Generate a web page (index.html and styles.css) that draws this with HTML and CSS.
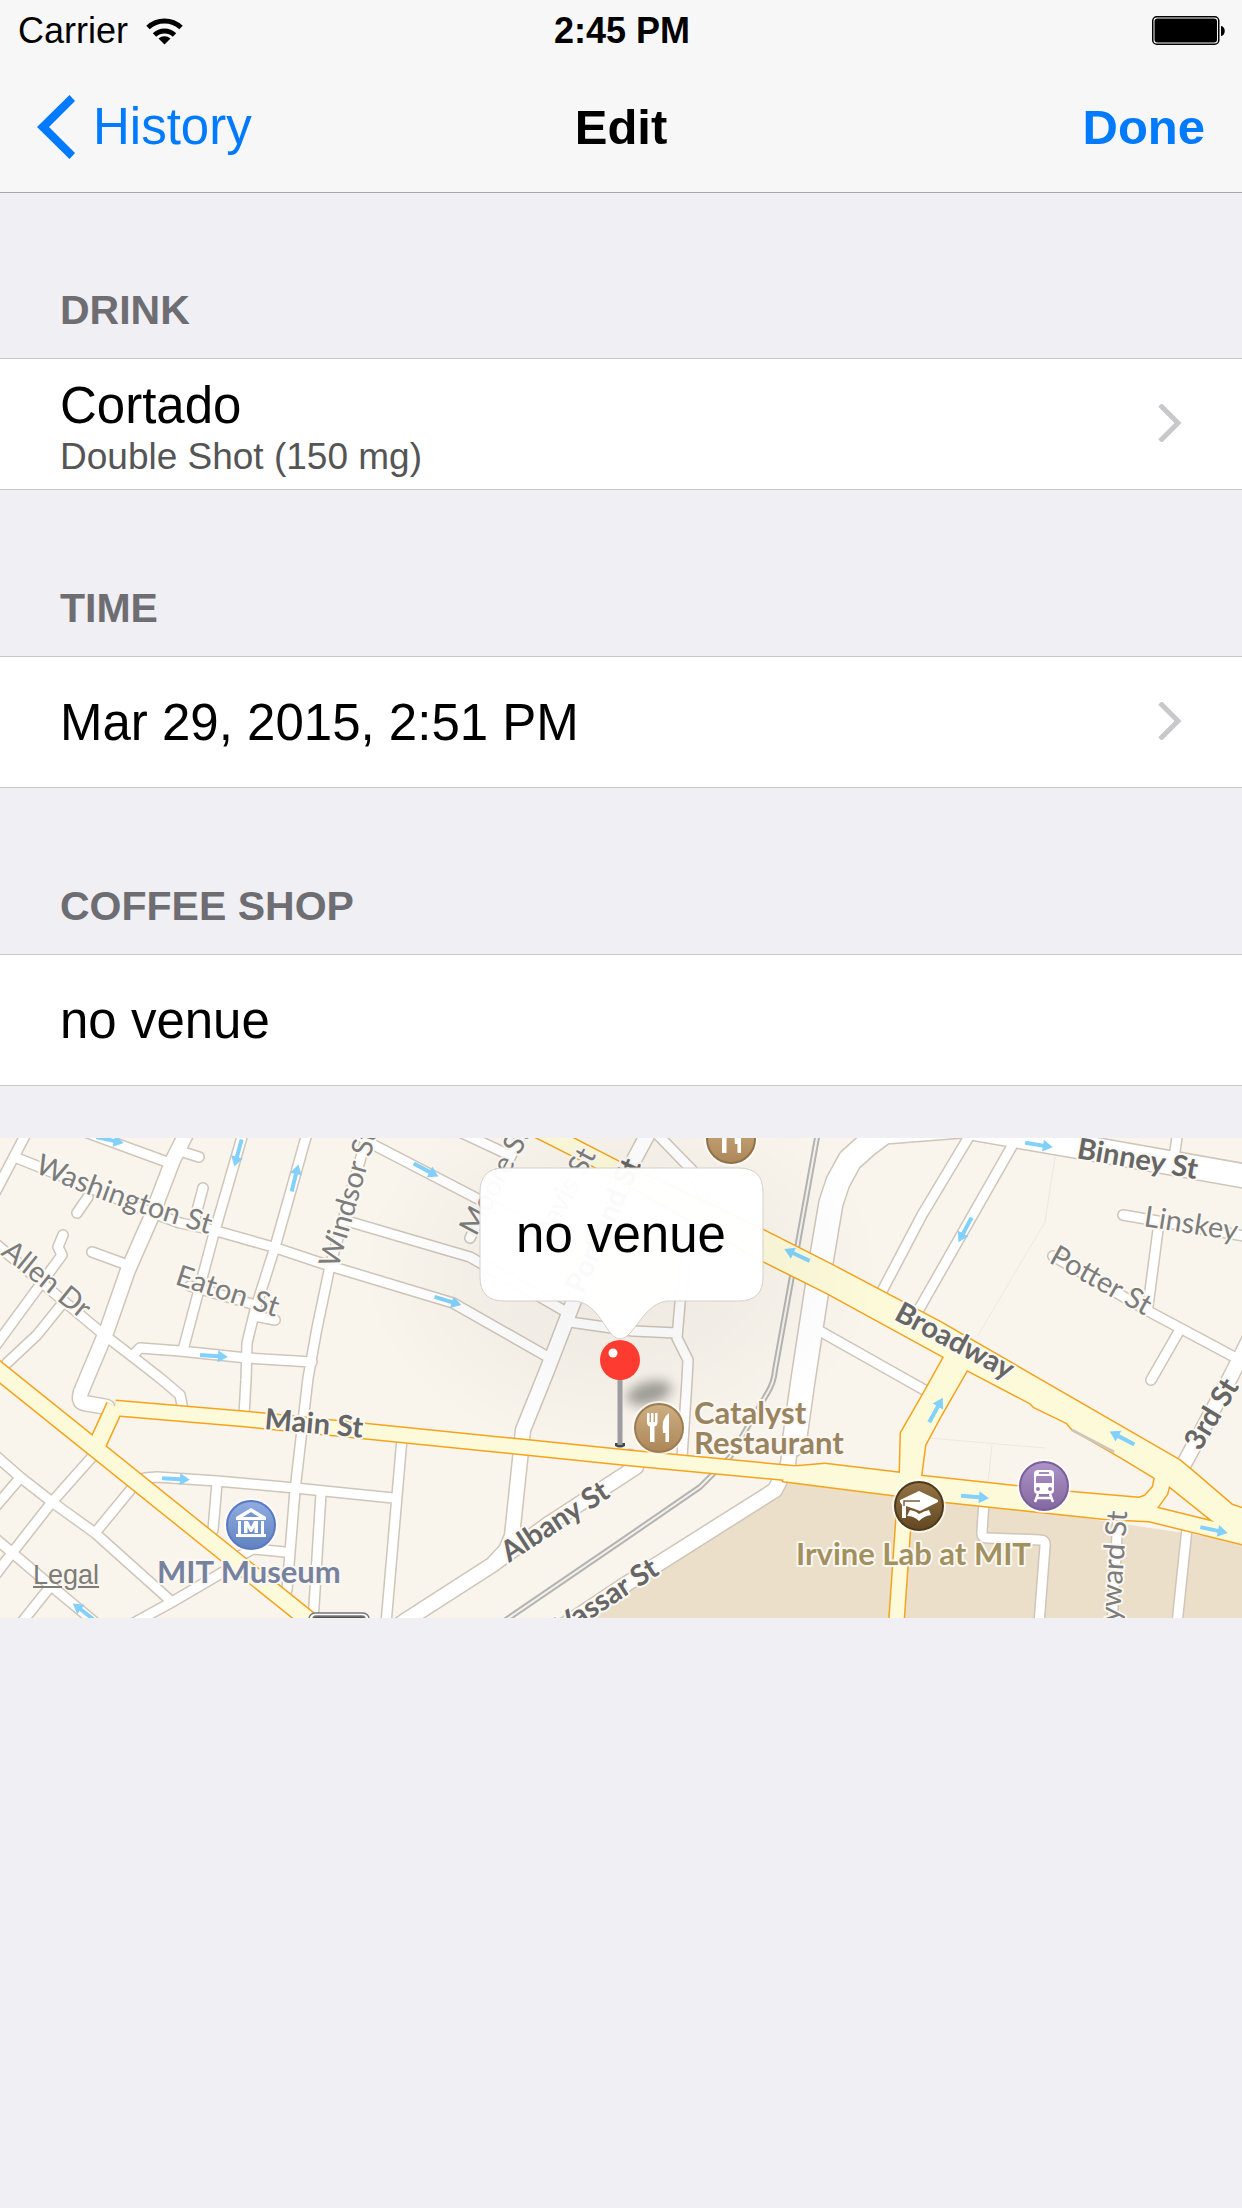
FILE: index.html
```html
<!DOCTYPE html>
<html lang="en">
<head>
<meta charset="utf-8">
<meta name="viewport" content="width=device-width, initial-scale=1">
<title>Edit</title>
<link rel="stylesheet" href="styles.css">
</head>
<body>
<header class="top">
  <div class="status">
    <div class="status-left">
      <span>Carrier</span>
      <svg class="wifi" viewBox="0 0 37 28" aria-hidden="true">
        <path d="M2 10.500A24 24 0 0 1 35 10.500" fill="none" stroke="#000" stroke-width="5"/>
        <path d="M8.500 18A14.500 14.500 0 0 1 28.500 18" fill="none" stroke="#000" stroke-width="5"/>
        <path d="M12.500 21.500A9 9 0 0 1 24.500 21.500L18.500 27.500Z"/>
      </svg>
    </div>
    <span class="clock">2:45 PM</span>
    <svg class="battery" viewBox="0 0 74 30" aria-hidden="true">
      <rect x=".75" y=".75" width="66" height="27.500" rx="4" fill="none" stroke="#000" stroke-width="1.500"/>
      <rect x="2.500" y="2.500" width="62.500" height="24" rx="3"/>
      <path d="M69 10C74 10.500 74 19.500 69 20Z"/>
    </svg>
  </div>
  <nav class="bar">
    <a class="back" href="#history">
      <svg class="back-arrow" viewBox="0 0 38 64" aria-hidden="true"><path d="M32.500 0L38 6L12 32L38 58L32.500 64L0 32Z" fill="#007aff"/></svg>
      <span>History</span>
    </a>
    <h1 class="title">Edit</h1>
    <button class="done" type="button">Done</button>
  </nav>
</header>

<main class="content">
  <section>
    <h2 class="label">DRINK</h2>
    <a class="row" href="#drink">
      <span class="stack"><span class="name">Cortado</span><span class="detail">Double Shot (150 mg)</span></span>
      <svg class="chevron" viewBox="0 0 24 38" aria-hidden="true"><path d="M2 1L20 19L2 37" fill="none" stroke="#c7c7cc" stroke-width="5"/></svg>
    </a>
  </section>
  <section>
    <h2 class="label">TIME</h2>
    <a class="row" href="#time">
      <span>Mar 29, 2015, 2:51 PM</span>
      <svg class="chevron" viewBox="0 0 24 38" aria-hidden="true"><path d="M2 1L20 19L2 37" fill="none" stroke="#c7c7cc" stroke-width="5"/></svg>
    </a>
  </section>
  <section>
    <h2 class="label">COFFEE SHOP</h2>
    <div class="row">no venue</div>
  </section>

  <div class="map">
    <svg class="map-art" viewBox="0 0 1242 480" preserveAspectRatio="xMidYMid slice" role="img" aria-label="Map with a pin at no venue">
      <defs>
        <g id="minor">
          <path d="M28-8L-4 53M17 20L37 28L100 54L150 74L180 85L213 92L273 109L330 128L453 165L548 219M85-6L167 24M183 14L199 19M203 50L195 80M92 114L125 126M88 59L77 75"/>
          <path d="M-4 106L60 160L103 196L133 219L160 240L180 257L183 272M63 97L58 109L62 117L-4 207M62 166L37 197L7 225M244-8L213 99L183 212M308-8L275 109L255 172L247 205L246 242L244 277M190 148L252 166M255 178L275 182M134 216L140 210L180 213L247 220L312 224"/>
          <path d="M368-3L363 12L330 128L317 190L308 240L295 352L287 452M354-6L370 5L480 62L570 108M347 83L470 119L563 172M460-6L507 16M524-8L513 14L470 100M570 184L633 193L677 195M655-6L692 32L703 55L690 90L680 165L677 200L688 222L687 242L682 320"/>
          <path d="M973-8L922 77L880 157M1012 8L922 166L914 180M1178-8L1174 20M1123 77L1250 99M1158 92L1148 168M1053 118L1150 174L1238 221M1178 195L1151 242M818 192L928 254"/>
          <path d="M-4 318L20 339L52 364L95 395L172 464M92 319L52 364L12 415L-4 436M20 340L-4 368M132 350L95 395M-4 401L50 447L97 486M50 449L22 484M132 486L172 464L230 430M236 420L253 411L285 414M145 340L157 339L217 343L295 350L393 360M217 345L213 392M321 355L313 484M402 300L386 486"/>
          <path d="M984 362L982 394Q981 400 988 400L1040 402Q1046 402 1045 408L1039 486M1187 390L1177 486M1118 380L1112 486M1230 245L1250 195"/>
        </g>
        <g id="medium">
          <path d="M187-6L173 22L150 82L128 132L107 192L86 242L81 254Q78 264 84 265L107 269M650-8L635 20L573 165L546 235L523 292L521 312L512 398L506 412L492 427L405 483L395 490M630 319L636 329L550 385L492 427M790 310L788 326L775 352L620 450L560 490M1252 196L1230 240L1183 328"/>
        </g>
        <g id="wide">
          <path d="M960-12L884-6L868 6L850 22L838 44L831 65L822 118L803 242L794 306M960-12L1104 13L1250 39"/>
        </g>
        <g id="main-lines">
          <path d="M-10 226L310 483M98 305L115 268"/>
        </g>
        <g id="main-narrow"><path d="M115 270L245 281L523 309L630 320L800 336M905 360L896 490"/></g>
        <path id="main-area" fill-rule="evenodd" d="M555-9L625 27L763 92L832 127L940 184L1179 322L1190 331L1232 367L1250 373V408L1149 383L1107 381L947 364L893 357L783 343L790 329L825 326L900 335L901 295L924 255L944 219L827 155L763 123L597 30L520-9ZM967 232L1030 265L1034 269L1067 285L1072 291L1122 320L1155 340L1153 349L1145 358L1139 360L1069 354L921 338L925 307L940 279ZM1169 348L1167 356L1157 370L1214 384Z"/>
        <g id="arrow"><path d="M-14-2H4V-6L14 0L4 6V2H-14Z" fill="#82d0fc"/></g>
        <g id="cutlery" fill="#fff"><path d="M-12-15h2.500v9h1.500v-9h2.500v9h1.500v-9h2.500v9q0 4-3 4.500V14h-4.500V-1.500q-3-.5-3-4.500ZM10-15V14H6.500V5H4Q2-10 10-15Z"/></g>
        <linearGradient id="tan" x2="0" y2="1"><stop offset="0" stop-color="#ceaf83"/><stop offset="1" stop-color="#ac8658"/></linearGradient>
        <linearGradient id="blue" x2="0" y2="1"><stop offset="0" stop-color="#8fade2"/><stop offset="1" stop-color="#6182bf"/></linearGradient>
        <linearGradient id="brown" x2="0" y2="1"><stop offset="0" stop-color="#937347"/><stop offset="1" stop-color="#624821"/></linearGradient>
        <linearGradient id="purple" x2="0" y2="1"><stop offset="0" stop-color="#ae94c7"/><stop offset="1" stop-color="#83689f"/></linearGradient>
        <radialGradient id="shade"><stop offset="0" stop-opacity=".05"/><stop offset=".5" stop-opacity=".03"/><stop offset="1" stop-opacity="0"/></radialGradient>
        <filter id="soft" x="-50%" y="-80%" width="200%" height="260%"><feGaussianBlur stdDeviation="6"/></filter>
        <path id="washington" d="M34 34Q120 73 244 106"/>
      </defs>

      <rect width="1242" height="480" fill="#f9f5ed"/>
      <path d="M785 335V345L770 358L580 485H1250V405Z" fill="#ebdfc9"/>
      <path d="M1055 19L1045 84L977 199M929 300L1045 310M992 307L988 344" fill="none" stroke="#ebe8e2"/>

      <g class="casing"><use href="#minor" class="c-minor"/><use href="#medium" class="c-medium"/><use href="#wide" class="c-wide"/></g>
      <g class="rail"><path class="rail-edge" d="M818-6L775 232Q774 244 768 254L730 319L700 349L620 404L497 488"/><path class="rail-core" d="M818-6L775 232Q774 244 768 254L730 319L700 349L620 404L497 488"/></g>
      <g class="surface"><use href="#minor" class="s-minor"/><use href="#medium" class="s-medium"/><use href="#wide" class="s-wide"/></g>
      <g class="casing-main"><use href="#main-lines" class="m-line-edge"/><use href="#main-narrow" class="m-narrow-edge"/><use href="#main-area" class="m-area"/></g>
      <g class="surface-main"><use href="#main-lines" class="m-line"/><use href="#main-narrow" class="m-narrow"/><use href="#main-area" class="m-fill"/></g>
      <path d="M1072 292L1114 314" stroke="#cfc5b9" stroke-width="3"/>

      <use href="#arrow" transform="translate(110 2) rotate(12)"/>
      <use href="#arrow" transform="translate(238 15) rotate(105)"/>
      <use href="#arrow" transform="translate(295 40) rotate(-76)"/>
      <use href="#arrow" transform="translate(214 218) rotate(4)"/>
      <use href="#arrow" transform="translate(176 341) rotate(3)"/>
      <use href="#arrow" transform="translate(84 474) rotate(218)"/>
      <use href="#arrow" transform="translate(426 32) rotate(28)"/>
      <use href="#arrow" transform="translate(448 163) rotate(17)"/>
      <use href="#arrow" transform="translate(797 117) rotate(205)"/>
      <use href="#arrow" transform="translate(936 272) rotate(-61)"/>
      <use href="#arrow" transform="translate(1039 7) rotate(9)"/>
      <use href="#arrow" transform="translate(965 92) rotate(118)"/>
      <use href="#arrow" transform="translate(1122 300) rotate(208)"/>
      <use href="#arrow" transform="translate(975 359) rotate(5)"/>
      <use href="#arrow" transform="translate(1214 392) rotate(12)"/>

      <g class="street">
        <text><textPath href="#washington">Washington St</textPath></text>
        <text transform="translate(0 116) rotate(39)">Allen Dr</text>
        <text transform="translate(174 146) rotate(18)">Eaton St</text>
        <text transform="translate(338 131) rotate(-74)">Windsor St</text>
        <text transform="translate(476 99) rotate(-62)">Moore St</text>
        <text transform="translate(548 108) rotate(-62)">Davis St</text>
        <text transform="translate(1143 88) rotate(9)">Linskey</text>
        <text transform="translate(1048 124) rotate(29)">Potter St</text>
        <text transform="translate(1117 520) rotate(-86)">Hayward St</text>
      </g>
      <g class="street major">
        <text transform="translate(583 157) rotate(-66)">Portland St</text>
        <text transform="translate(264 291) rotate(5)">Main St</text>
        <text transform="translate(509 425) rotate(-33)">Albany St</text>
        <text transform="translate(563 499) rotate(-33)">Vassar St</text>
        <text transform="translate(893 181) rotate(28)">Broadway</text>
        <text transform="translate(1076 20) rotate(10)">Binney St</text>
        <text transform="translate(1200 314) rotate(-59)">3rd St</text>
      </g>

      <g stroke="#777" stroke-width="1.500"><rect x="309" y="475" width="60" height="40" rx="6" fill="#fff"/><rect x="313" y="478" width="52" height="40" rx="3" fill="#555"/></g>

      <ellipse cx="621" cy="130" rx="260" ry="190" fill="url(#shade)"/>

      <g class="poi">
        <text x="157" y="445" fill="#77829f">MIT Museum</text>
        <text x="694" y="286" fill="#9a845f">Catalyst</text>
        <text x="694" y="316" fill="#9a845f">Restaurant</text>
        <text x="796" y="427" fill="#a3905f">Irvine Lab at MIT</text>
      </g>

      <ellipse cx="649" cy="255" rx="23" ry="11" transform="rotate(-15 649 255)" opacity=".35" filter="url(#soft)"/>

      <g transform="translate(251 387)"><circle class="halo" r="27"/><circle r="24" fill="url(#blue)" stroke="#5a79c2" stroke-width="2"/><path d="M0-17L15-8V-5H-15V-8ZM-13-4h3V9H10V-4h3V9h2v3H-15V9h2ZM-7-4H-3L0 2L3-4H7V8H3.500V2L1 7H-1L-3.500 2V8H-7Z" fill="#fff"/><path d="M0-13L8-8H-8Z" fill="#7895d0"/></g>
      <g transform="translate(659 290)"><circle class="halo" r="27"/><circle r="24" fill="url(#tan)" stroke="#9d7c50" stroke-width="2"/><use href="#cutlery"/></g>
      <g transform="translate(731 1)"><circle class="halo" r="27"/><circle r="24" fill="url(#tan)" stroke="#8f7148" stroke-width="2"/><use href="#cutlery"/></g>
      <g transform="translate(919 368)"><circle class="halo" r="27"/><circle r="24" fill="url(#brown)" stroke="#4f3916" stroke-width="2"/><path d="M0-15L19-6V-4L1 5Q-4 3-13 0V12H-17V-1L-19-4V-6ZM-9 4Q-3 5 0 8Q5 5 10 4L12 9Q5 10 0 15Q-5 10-12 10Z" fill="#fff"/><path d="M1-5H-15V0" fill="none" stroke="#7d6037" stroke-width="1.500"/></g>
      <g transform="translate(1044 348)"><circle class="halo" r="27"/><circle r="24" fill="url(#purple)" stroke="#7a5f9c" stroke-width="2"/><path fill="#fff" fill-rule="evenodd" d="M-6-16H6Q10-16 10-12V4Q10 8 6 8H-6Q-10 8-10 4V-12Q-10-16-6-16ZM-5-14V-12H5V-14ZM-7-10Q-8-10-8-8V-3H8V-8Q8-10 7-10ZM-8 3a2 2 0 1 0 4 0a2 2 0 1 0-4 0M4 3a2 2 0 1 0 4 0a2 2 0 1 0-4 0"/><path d="M-6 8L-9 16M6 8L9 16M-8 12H8" stroke="#fff" stroke-width="2.500"/></g>

      <path d="M615 305H625V308Q620 311 615 308Z" fill="#444"/>
      <rect x="617.500" y="238" width="5" height="69" fill="#9b9da1"/>
      <circle cx="620" cy="222" r="20" fill="#fe3b30"/>
      <circle cx="613" cy="215" r="4.500" fill="#fff"/>

      <path d="M504 30H739Q763 30 763 54V139Q763 163 739 163H669C644 163 634 201 620 201C606 201 600 163 573 163H504Q480 163 480 139V54Q480 30 504 30Z" fill="#fff" fill-opacity=".97" stroke="#d5d0c9"/>
      <text class="callout" x="621" y="114">no venue</text>
    </svg>
    <a class="legal" href="#legal">Legal</a>
  </div>
</main>
</body>
</html>
```
FILE: styles.css
```css
* {
  box-sizing: border-box;
}

body {
  margin: 0;
  min-height: 100vh;
  background: #efeff4;
  color: #000;
  font-family: "Liberation Sans", Arial, sans-serif;
  font-size: 51px;
  line-height: 58px;
}

a {
  color: inherit;
  text-decoration: none;
}

.top {
  background: #f7f7f7;
  border-bottom: 1px solid #a8a8ac;
}

.status {
  display: grid;
  grid-template-columns: 1fr auto 1fr;
  align-items: center;
  height: 62px;
  padding: 0 16px 0 18px;
  font-size: 36px;
  line-height: 44px;
}

.status-left {
  display: flex;
  align-items: center;
  gap: 18px;
}

.wifi {
  width: 37px;
  height: 28px;
}

.clock {
  font-weight: bold;
}

.battery {
  justify-self: end;
  width: 74px;
  height: 30px;
}

.bar {
  display: grid;
  grid-template-columns: 1fr auto 1fr;
  align-items: center;
  height: 130px;
  padding: 0 37px;
}

.back {
  display: flex;
  align-items: center;
  gap: 18px;
  color: #007aff;
}

.back-arrow {
  width: 38px;
  height: 64px;
}

.title {
  margin: 0;
  font-size: 49px;
  font-weight: bold;
}

.done {
  justify-self: end;
  padding: 0;
  border: 0;
  background: none;
  color: #007aff;
  font: bold 49px "Liberation Sans", Arial, sans-serif;
}

.content {
  margin-top: -1px;
}

.label {
  display: flex;
  align-items: flex-end;
  height: 166px;
  margin: 0;
  padding: 0 60px 23px;
  color: #6d6d72;
  font-size: 41px;
  line-height: 50px;
}

.row {
  display: flex;
  align-items: center;
  justify-content: space-between;
  min-height: 132px;
  padding: 2px 60px 0;
  border: solid #c8c7cc;
  border-width: 1px 0;
  background: #fff;
}

.stack {
  display: flex;
  flex-direction: column;
  padding-top: 5px;
}

.detail {
  color: #555;
  font-size: 37px;
  line-height: 44px;
}

.chevron {
  width: 24px;
  height: 38px;
  margin-bottom: 4px;
}

.map {
  position: relative;
  height: 480px;
  margin-top: 52px;
  overflow: hidden;
}

.map-art {
  display: block;
  width: 100%;
  height: 100%;
}

.legal {
  position: absolute;
  left: 33px;
  bottom: 27px;
  color: #7d7c78;
  font-size: 27px;
  line-height: 32px;
  text-decoration: underline;
}

.casing,
.surface,
.rail,
.casing-main,
.surface-main {
  fill: none;
  stroke-linejoin: round;
}

.casing {
  stroke: #cfc5b9;
  stroke-linecap: round;
}

.surface {
  stroke: #fff;
  stroke-linecap: round;
}

.c-minor { stroke-width: 12px; }
.c-medium { stroke-width: 17px; }
.c-wide { stroke-width: 26px; }
.s-minor { stroke-width: 9px; }
.s-medium { stroke-width: 14px; }
.s-wide { stroke-width: 23px; }

.rail-edge {
  stroke: #b4b4b2;
  stroke-width: 6px;
}

.rail-core {
  stroke: #f3f1ec;
  stroke-width: 2px;
}

.casing-main { stroke: #f5a31b; }
.surface-main { stroke: #fcfad9; }
.m-line-edge { stroke-width: 19px; }
.m-narrow-edge { stroke-width: 17px; }
.m-line { stroke-width: 16px; }
.m-narrow { stroke-width: 14px; }
.m-area { stroke-width: 3px; }

.m-fill {
  fill: #fcfad9;
  stroke: none;
}

.street,
.poi {
  font-family: Lato, "Open Sans", sans-serif;
  font-size: 29px;
  paint-order: stroke;
  stroke: #fbf8f2;
  stroke-width: 4px;
  stroke-linejoin: round;
}

.street {
  fill: #7c7c7c;
}

.major {
  fill: #666;
  font-weight: bold;
}

.poi {
  font-size: 31px;
  font-weight: bold;
}

.halo {
  fill: #fff;
  opacity: .7;
}

.callout {
  font-size: 51px;
  text-anchor: middle;
}
```
